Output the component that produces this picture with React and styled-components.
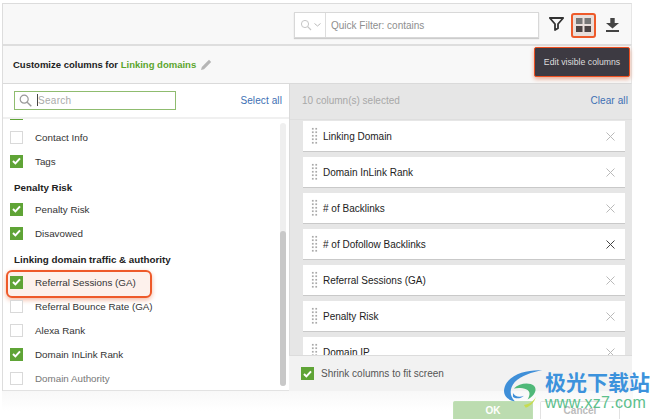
import React from 'react';
import styled, { createGlobalStyle } from 'styled-components';

const Global = createGlobalStyle`
  html, body { margin: 0; padding: 0; background: #fff; }
  body { font-family: "Liberation Sans", Arial, sans-serif; width: 661px; height: 419px; overflow: hidden; }
  * { box-sizing: border-box; }
`;
const Page = styled.div`position: relative; width: 661px; height: 419px; overflow: hidden; padding: 3px 0 0 2px;`;
const Frame = styled.div`width: 630px; height: 416px; display: flex; flex-direction: column; border-left: 1px solid #ddd; position: relative;`;
const Toolbar = styled.div`
  height: 41px; flex: none; background: #f8f8f8; border-top: 1px solid #dcdcdc; border-right: 1px solid #e6e6e6;
  display: flex; align-items: center; justify-content: flex-end; padding: 0 6px 0 0;
`;
const FilterBox = styled.div`
  width: 245px; height: 26px; margin-top: 2px; background: #fff; border: 1px solid #d8d8d8; box-shadow: 0 1px 1px #ccc; display: flex; align-items: center; margin-right: 10px;
`;
const FilterIcon = styled.div`width: 31px; height: 100%; border-right: 1px solid #ddd; display: flex; align-items: center; justify-content: center; gap: 2px; flex: none;`;
const FilterText = styled.span`font-size: 10px; color: #8e8e8e; padding-left: 5px;`;
const ToolIcon = styled.div`
  width: 25px; height: 25px; margin-top: 2px; display: flex; align-items: center; justify-content: center; border-radius: 3px; margin-left: ${p => p.$ml || 0}px;
  ${p => p.$active && 'background:#e9dfdb; border:2px solid #ee5a2a;'}
`;
const Header = styled.div`
  height: 40px; flex: none; background: #f8f8f8; border-top: 2px solid #dedede; border-bottom: 1px solid #dadada; border-right: 1px solid #e6e6e6;
  display: flex; align-items: center; padding: 0 0 0 10px; gap: 5px;
`;
const Title = styled.div`font-size: 9.5px; font-weight: 700; color: #222;`;
const Green = styled.span`color: #5ba52c;`;
const Columns = styled.div`height: 307px; flex: none; display: flex;`;
const Left = styled.div`width: 286px; flex: none; background: #fff; display: flex; flex-direction: column; position: relative; border-bottom: 1px solid #e2e2e2;`;
const SearchRow = styled.div`height: 35px; flex: none; display: flex; align-items: center; justify-content: space-between; padding: 0 7px 1px 11px; border-bottom: 2px solid #f0f0f0;`;
const SearchBox = styled.div`width: 162px; height: 19px; border: 1px solid #8fbc6f; display: flex; align-items: center; padding-left: 4px; gap: 4px;`;
const Caret = styled.span`width: 1px; height: 12px; background: #444; margin-left: 1px;`;
const SearchText = styled.span`font-size: 10px; line-height: 13px; color: #aaa; margin-left: -4px; letter-spacing: .3px;`;
const LinkText = styled.a`font-size: 10px; line-height: 13px; color: #3d6fb4; letter-spacing: .1px;`;
const List = styled.div`flex: 1; overflow: hidden; position: relative; padding-left: 7px;`;
const Inner = styled.div`margin-top: ${p => p.$offset}px; display: flex; flex-direction: column;`;
const Row = styled.div`
  height: 24px; flex: none; display: flex; align-items: center; gap: 12px; position: relative; z-index: 0;
  font-size: 9.8px; color: ${p => p.$dim ? '#777' : '#333'};
  ${p => p.$hl && `&::before { content: ""; position: absolute; z-index: -1; left: -4px; top: 0; width: 142px; height: 24px; border: 2px solid #ee5a2a; border-radius: 6px; background: #fdf1ec; box-shadow: 0 2px 5px #f3b9a3; }`}
`;
const Box = styled.span`
  width: 13px; height: 13px; flex: none; display: inline-flex; align-items: center; justify-content: center; border: 1px solid ${p => p.$on ? '#5fa436' : '#d9d9d9'}; background: ${p => p.$on ? '#5fa436' : '#fff'};
`;
const Group = styled.div`height: ${p => p.$h}px; flex: none; padding: 9px 0 0 4px; font-size: 9.8px; line-height: 11px; font-weight: 700; color: #222;`;
const Track = styled.div`position: absolute; right: 3px; top: 4px; width: 6px; height: 263px; background: #efefef; border-radius: 3px;`;
const Thumb = styled.div`position: absolute; left: 0; right: 0; bottom: 0; height: 155px; background: #c8c8c8; border-radius: 3px;`;
const Right = styled.div`flex: 1; background: #e6e6e6; border-left: 1px solid #dadada; display: flex; flex-direction: column; position: relative;`;
const RightHead = styled.div`height: 36px; flex: none; display: flex; align-items: center; justify-content: space-between; padding: 0 4px 3px 12px; border-bottom: 1px solid #dedede;`;
const Count = styled.span`font-size: 10px; color: #a8a8a8;`;
const Cards = styled.div`flex: 1; overflow: hidden; padding: 1px 7px 0 13px; display: flex; flex-direction: column; gap: 5px;`;
const Card = styled.div`height: 31px; flex: none; background: #fff; border-bottom: 1px solid #c9c9c9; display: flex; align-items: center; padding: 0 10px 0 8px; font-size: 10px; line-height: 13px; color: #222;`;
const CardLabel = styled.span`flex: 1; margin-left: 5px;`;
const Grip = styled.span`width: 7px; height: 18px; flex: none; background-image: radial-gradient(circle, #a9a9a9 1px, transparent 1.1px); background-size: 3.5px 3.5px;`;
const Shrink = styled.div`height: 36px; flex: none; background: #f2f2f2; border-top: 1px solid #dcdcdc; display: flex; align-items: center; padding-left: 12px; gap: 7px; font-size: 10px; color: #555; margin-left: -1px;`;
const Footer = styled.div`flex: 1; background: linear-gradient(#f8f8f8, #fff 20px); display: flex; justify-content: flex-end; align-items: flex-end; padding-right: 13px; gap: 7px; margin-left: -1px; margin-right: -1px;`;
const Btn = styled.button`
  width: ${p => p.$w}px; height: 18px; padding: 0; font: 700 10px "Liberation Sans", Arial, sans-serif; border-radius: 2px 2px 0 0; border: 1px solid ${p => p.$ok ? '#bfe0b4' : '#e2e2e2'}; border-bottom: 0;
  background: ${p => p.$ok ? '#bcdcb0' : '#fff'}; color: ${p => p.$ok ? '#fff' : '#bbb'};
`;
const Tooltip = styled.div`
  position: absolute; left: 531px; top: 44px; width: 96px; height: 30px; background: #3d3a42; border: 1.5px solid #ee4f20; border-radius: 2px; box-shadow: 0 2px 4px #e8a68d;
  font-size: 8.7px; color: #ddd; display: flex; align-items: center; justify-content: center;
`;
const Watermark = styled.div`position: absolute; z-index: 2; left: 502px; top: 368px; width: 158px; height: 44px; display: flex; pointer-events: none;`;
const WmText = styled.div`margin-left: 1px; display: flex; flex-direction: column;`;
const WmCn = styled.div`font: 700 21px/26px "Noto Sans CJK SC", sans-serif; color: #3c92dc; white-space: nowrap;`;
const WmUrl = styled.div`font: 400 16px/16px "Liberation Sans", sans-serif; color: #5cc08d; letter-spacing: .3px; white-space: nowrap; margin-top: 1px;`;

const Check = () => (
  <svg width="9" height="8" viewBox="0 0 9 8"><path d="M1 4l2.4 2.4L8 1.4" fill="none" stroke="#fff" strokeWidth="2" /></svg>
);
const Cross = ({ dark }) => (
  <svg width="9" height="9" viewBox="0 0 9 9"><path d="M.5.5l8 8M8.5.5l-8 8" stroke={dark ? '#444' : '#b9b9b9'} strokeWidth="1" fill="none" /></svg>
);
const Item = ({ on, dim, hl, children }) => (
  <Row $dim={dim} $hl={hl}><Box $on={on}>{on && <Check />}</Box>{children}</Row>
);
const cards = ['Linking Domain', 'Domain InLink Rank', '# of Backlinks', '# of Dofollow Backlinks', 'Referral Sessions (GA)', 'Penalty Risk', 'Domain IP'];

export default function App() {
  return (
    <Page>
      <Global />
      <Frame>
        <Toolbar>
          <FilterBox>
            <FilterIcon>
              <svg width="12" height="12" viewBox="0 0 12 12"><circle cx="5" cy="5" r="3.6" fill="none" stroke="#c6c6c6" strokeWidth="1" /><path d="M7.7 7.7L11 11" stroke="#c6c6c6" strokeWidth="1.2" /></svg>
              <svg width="7" height="4" viewBox="0 0 7 4"><path d="M.5.5L3.5 3l3-2.5" fill="none" stroke="#bbb" /></svg>
            </FilterIcon>
            <FilterText>Quick Filter: contains</FilterText>
          </FilterBox>
          <svg width="15" height="14" viewBox="0 0 15 14"><path d="M.8 1h13.4L9 7v4.2L6 13V7z" fill="none" stroke="#333" strokeWidth="1.8" strokeLinejoin="round" /></svg>
          <ToolIcon $active $ml={7}>
            <svg width="15" height="14" viewBox="0 0 15 14"><path d="M0 0h6.5v6H0zM8.5 0H15v6H8.5z" fill="#777" /><path d="M0 8h6.5v6H0zM8.5 8H15v6H8.5z" fill="#4c4444" /></svg>
          </ToolIcon>
          <ToolIcon $ml={4}>
            <svg width="13" height="14" viewBox="0 0 13 14"><path d="M4.3 0h4.4v5H13L6.5 10.5 0 5h4.3z" fill="#444" /><path d="M0 12h13v2H0z" fill="#444" /></svg>
          </ToolIcon>
        </Toolbar>
        <Header>
          <Title>Customize columns for <Green>Linking domains</Green></Title>
          <svg width="11" height="11" viewBox="0 0 11 11"><path d="M0 11l.8-3L8 .8 10.2 3 3 10.2z" fill="#b5b5b5" /></svg>
        </Header>
        <Columns>
          <Left>
            <SearchRow>
              <SearchBox>
                <svg width="13" height="13" viewBox="0 0 13 13"><circle cx="5.2" cy="5.2" r="4" fill="none" stroke="#999" strokeWidth="1.2" /><path d="M8.2 8.2L12.3 12.3" stroke="#999" strokeWidth="1.4" /></svg>
                <Caret />
                <SearchText>Search</SearchText>
              </SearchBox>
              <LinkText>Select all</LinkText>
            </SearchRow>
            <List>
              <Inner $offset={-18}>
                <Item on>Website</Item>
                <Item>Contact Info</Item>
                <Item on>Tags</Item>
                <Group $h={24}>Penalty Risk</Group>
                <Item on>Penalty Risk</Item>
                <Item on>Disavowed</Item>
                <Group $h={25}>Linking domain traffic &amp; authority</Group>
                <Item on hl>Referral Sessions (GA)</Item>
                <Item>Referral Bounce Rate (GA)</Item>
                <Item>Alexa Rank</Item>
                <Item on>Domain InLink Rank</Item>
                <Item dim>Domain Authority</Item>
              </Inner>
              <Track><Thumb /></Track>
            </List>
          </Left>
          <Right>
            <RightHead>
              <Count>10 column(s) selected</Count>
              <LinkText>Clear all</LinkText>
            </RightHead>
            <Cards>
              {cards.map((c, i) => (
                <Card key={c}><Grip /><CardLabel>{c}</CardLabel><Cross dark={i === 3} /></Card>
              ))}
            </Cards>
            <Shrink><Box $on><Check /></Box>Shrink columns to fit screen</Shrink>
          </Right>
        </Columns>
        <Footer>
          <Btn $ok $w={80}>OK</Btn>
          <Btn $w={80}>Cancel</Btn>
        </Footer>
        <Tooltip>Edit visible columns</Tooltip>
      </Frame>
      <Watermark>
        <svg width="42" height="41" viewBox="0 0 46 44" style={{ flex: 'none' }}>
          <path d="M44 2C28 1 8 6 3 20c-3 9 3 15 11 16C8 30 8 22 14 15 21 8 33 4 44 2z" fill="#3f8fd8" />
          <path d="M13 22c6-6 17-7 22-3 4 4 1 11-7 15 3-5 3-9-1-11-5-2-10-2-14-1z" fill="#4fb878" />
          <path d="M12 27c2 4 7 5 12 3-3 3-9 4-12 1z" fill="#3f8fd8" />
          <path d="M24 40c6-1 11-4 13-9-1 5-5 10-11 12z" fill="#c6dc50" />
        </svg>
        <WmText>
          <WmCn>极光下载站</WmCn>
          <WmUrl>www.xz7.com</WmUrl>
        </WmText>
      </Watermark>
    </Page>
  );
}
